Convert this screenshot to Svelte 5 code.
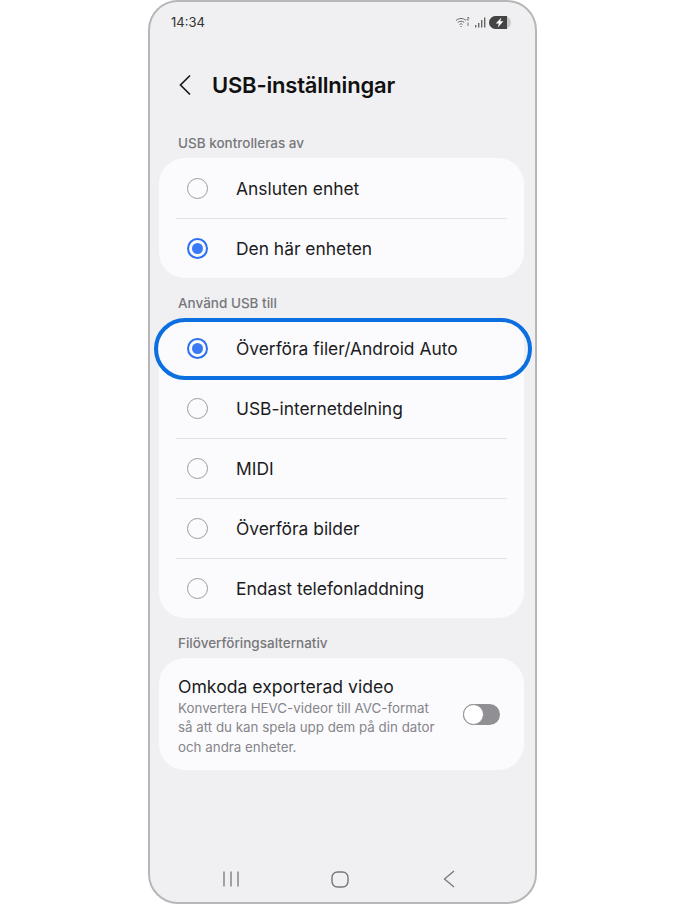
<script>
  const controlled = [
    { label: "Ansluten enhet", on: false },
    { label: "Den här enheten", on: true }
  ];
  const usedFor = [
    { label: "Överföra filer/Android Auto", on: true, focus: true },
    { label: "USB-internetdelning", on: false },
    { label: "MIDI", on: false },
    { label: "Överföra bilder", on: false },
    { label: "Endast telefonladdning", on: false }
  ];
</script>

{#snippet row(item)}
  <div class="row" class:focus={item.focus}>
    <span class="radio" class:on={item.on}></span>
    <span class="row-label">{item.label}</span>
  </div>
{/snippet}

<div class="page">
  <div class="phone">
    <div class="status">
      <span class="time">14:34</span>
      <div class="status-icons">
        <svg width="16" height="12" viewBox="0 0 16 12" fill="none" stroke="#666" stroke-width="1">
          <path d="M1 4.5C4 1.8 8 1.8 11 4.5" />
          <path d="M2.8 6.5C4.8 4.8 7.2 4.8 9.2 6.5" />
          <path d="M4.5 8.5C5.5 7.6 6.5 7.6 7.5 8.5" />
          <path d="M6 10.2v.8" stroke-width="1.4" />
          <path d="M13 1v3.5M11.8 3.2 13 4.5M14.2 2.3 13 1M13 6.5V10" stroke-width="0.9" />
        </svg>
        <svg width="12" height="11" viewBox="0 0 12 11" fill="#666">
          <rect x="1" y="8" width="1.4" height="2.5" />
          <rect x="4" y="6" width="1.4" height="4.5" />
          <rect x="7" y="3" width="1.4" height="7.5" />
          <rect x="10" y="0.5" width="1.4" height="10" />
        </svg>
        <svg width="22" height="13" viewBox="0 0 22 13">
          <rect x="0" y="0" width="22" height="13" rx="6.5" fill="#c9c9cb" />
          <path d="M0 6.5A6.5 6.5 0 0 1 6.5 0H18V13H6.5A6.5 6.5 0 0 1 0 6.5Z" fill="#444" />
          <path d="M12.4 1.4 6.8 7.6h3.1l-1.1 4 5.6-6.4h-3.2z" fill="#fff" />
        </svg>
      </div>
    </div>

    <div class="header">
      <svg class="back" width="14" height="22" viewBox="0 0 14 22" fill="none" stroke="#1a1a1a" stroke-width="1.7">
        <path d="M12 1.5 2.5 11 12 20.5" />
      </svg>
      <h1>USB-inställningar</h1>
    </div>

    <div class="section-label first">USB kontrolleras av</div>
    <div class="card list">
      {#each controlled as item}
        {@render row(item)}
      {/each}
    </div>

    <div class="section-label">Använd USB till</div>
    <div class="card list">
      {#each usedFor as item}
        {@render row(item)}
      {/each}
    </div>

    <div class="section-label">Filöverföringsalternativ</div>
    <div class="card transcode">
      <div class="transcode-text">
        <div class="transcode-title">Omkoda exporterad video</div>
        <div class="transcode-desc">Konvertera HEVC-videor till AVC-format så att du kan spela upp dem på din dator och andra enheter.</div>
      </div>
      <span class="switch"><span class="knob"></span></span>
    </div>

    <div class="nav">
      <svg width="18" height="16" viewBox="0 0 18 16" fill="none" stroke="#777" stroke-width="1.3">
        <path d="M2 0.5v15M9 0.5v15M16 0.5v15" />
      </svg>
      <svg class="home" width="18" height="17" viewBox="0 0 18 17" fill="none" stroke="#777" stroke-width="1.4">
        <rect x="1" y="1" width="16" height="15" rx="5.5" />
      </svg>
      <svg width="12" height="18" viewBox="0 0 12 18" fill="none" stroke="#777" stroke-width="1.3">
        <path d="M11 1 1.5 9 11 17" />
      </svg>
    </div>
  </div>
</div>

<style>
  :global(body) {
    margin: 0;
    background: #fff;
  }

  .page {
    width: 684px;
    height: 904px;
    padding-left: 148px;
    box-sizing: border-box;
    font-family: Inter, "Liberation Sans", sans-serif;
  }

  .phone {
    position: relative;
    width: 389px;
    height: 904px;
    box-sizing: border-box;
    border: 2px solid #b7b7b9;
    border-radius: 30px;
    background: #f0f0f2;
    padding: 0 11px 0 9px;
    display: flex;
    flex-direction: column;
  }

  .status {
    display: flex;
    align-items: center;
    justify-content: space-between;
    height: 14px;
    margin-top: 13px;
    padding: 0 13px 0 12px;
  }

  .time {
    font-size: 13px;
    color: #333;
  }

  .status-icons {
    display: flex;
    align-items: center;
    gap: 3px;
  }

  .header {
    display: flex;
    align-items: center;
    height: 30px;
    margin-top: 41px;
    padding-left: 19px;
  }

  .back {
    margin-right: 20px;
  }

  h1 {
    margin: 0;
    font-size: 22px;
    font-weight: 600;
    letter-spacing: -0.2px;
    color: #111;
  }

  .section-label {
    height: 16px;
    line-height: 16px;
    margin: 17px 0 7px 19px;
    font-size: 13.5px;
    font-weight: 500;
    color: #77777a;
  }

  .section-label.first {
    margin-top: 35px;
  }

  .card {
    background: #fbfbfd;
    border-radius: 26px;
  }

  .list {
    padding-top: 1px;
  }

  .row {
    position: relative;
    display: flex;
    align-items: center;
    height: 60px;
    margin: 0 17px;
    box-sizing: border-box;
    border-bottom: 1px solid #e4e4e6;
  }

  .row:last-child {
    height: 59px;
    border-bottom: none;
  }

  .row.focus {
    border-bottom-color: transparent;
  }

  .row.focus::after {
    content: "";
    position: absolute;
    left: -22px;
    right: -25px;
    top: -1px;
    bottom: -2px;
    border: 4px solid #0b6fdf;
    border-radius: 31px;
  }

  .radio {
    width: 21px;
    height: 21px;
    box-sizing: border-box;
    margin-left: 11px;
    margin-right: 28px;
    border: 1.6px solid #9b9b9e;
    border-radius: 50%;
    display: flex;
    align-items: center;
    justify-content: center;
  }

  .radio.on {
    border: 2px solid #2a6ff2;
  }

  .radio.on::before {
    content: "";
    width: 11px;
    height: 11px;
    border-radius: 50%;
    background: #3a7bf5;
  }

  .row-label {
    font-size: 17.4px;
    color: #1c1c1e;
  }

  .transcode {
    display: flex;
    align-items: center;
    justify-content: space-between;
    height: 112px;
    box-sizing: border-box;
    padding: 0 24px 0 19px;
  }

  .transcode-text {
    width: 262px;
    padding-top: 5px;
  }

  .transcode-title {
    font-size: 17.6px;
    line-height: 22px;
    margin-bottom: 1px;
    color: #1c1c1e;
  }

  .transcode-desc {
    font-size: 13.35px;
    line-height: 19.5px;
    color: #85858a;
  }

  .switch {
    position: relative;
    width: 37px;
    height: 21px;
    box-sizing: border-box;
    border-radius: 11px;
    background: #8f8f94;
  }

  .knob {
    position: absolute;
    left: 0;
    top: 0;
    width: 21px;
    height: 21px;
    box-sizing: border-box;
    border: 1.5px solid #8f8f94;
    border-radius: 50%;
    background: #fff;
  }

  .nav {
    position: absolute;
    left: 0;
    right: 0;
    bottom: 14px;
    display: flex;
    align-items: center;
    justify-content: space-between;
    padding: 0 80px 0 72px;
  }

  .home {
    margin-right: 4px;
  }
</style>
